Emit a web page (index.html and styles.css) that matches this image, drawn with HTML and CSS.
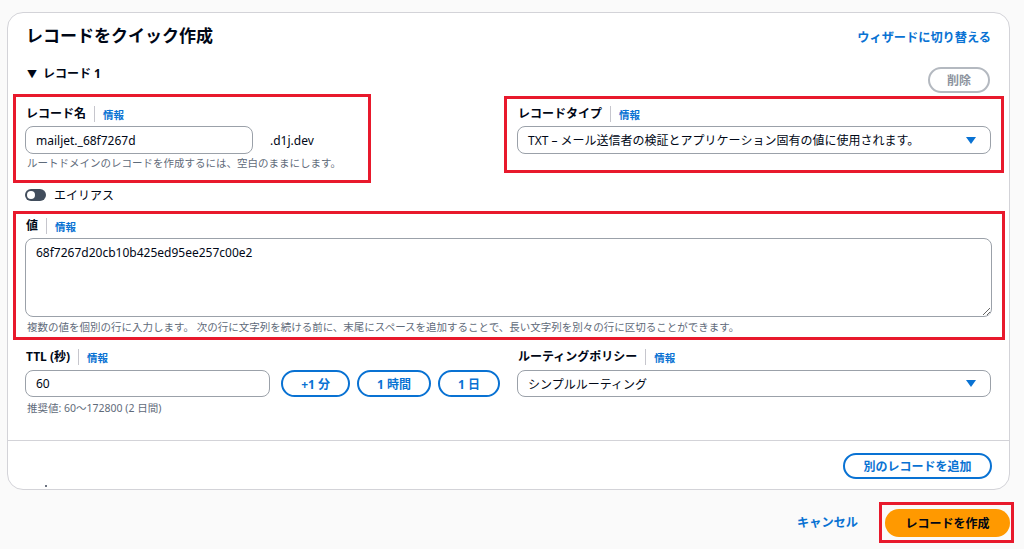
FILE: index.html
```html
<!DOCTYPE html>
<html lang="ja">
<head>
<meta charset="utf-8">
<title>レコードをクイック作成</title>
<link rel="stylesheet" href="styles.css">
</head>
<body>
<div class="page">
  <section class="card">
    <div class="card-body">
      <div class="card-header">
        <h1 class="title">レコードをクイック作成</h1>
        <a class="link-strong" href="#">ウィザードに切り替える</a>
      </div>

      <div class="section-head">
        <div class="expander"><span class="caret">▼</span>レコード 1</div>
        <button class="btn-disabled" type="button">削除</button>
      </div>

      <div class="grid">
        <div class="field">
          <div class="label-row"><span class="label">レコード名</span><span class="sep"></span><a class="info" href="#">情報</a></div>
          <div class="name-row">
            <input class="input input-name" type="text" value="mailjet._68f7267d" readonly>
            <span class="suffix">.d1j.dev</span>
          </div>
          <div class="hint">ルートドメインのレコードを作成するには、空白のままにします。</div>
        </div>
        <div class="field">
          <div class="label-row"><span class="label">レコードタイプ</span><span class="sep"></span><a class="info" href="#">情報</a></div>
          <div class="select">
            <span class="select-text">TXT – メール送信者の検証とアプリケーション固有の値に使用されます。</span>
            <svg class="caret-down" width="10" height="7" viewBox="0 0 10 7"><path d="M0 0H10L5 7Z" fill="#0972d3"/></svg>
          </div>
        </div>
      </div>

      <div class="toggle-row">
        <span class="toggle"><span class="knob"></span></span>
        <span class="toggle-label">エイリアス</span>
      </div>

      <div class="field value-field">
        <div class="label-row"><span class="label">値</span><span class="sep"></span><a class="info" href="#">情報</a></div>
        <textarea class="textarea" readonly>68f7267d20cb10b425ed95ee257c00e2</textarea>
        <div class="hint hint-tight">複数の値を個別の行に入力します。 次の行に文字列を続ける前に、末尾にスペースを追加することで、長い文字列を別々の行に区切ることができます。</div>
      </div>

      <div class="grid grid-ttl">
        <div class="field">
          <div class="label-row"><span class="label">TTL (秒)</span><span class="sep"></span><a class="info" href="#">情報</a></div>
          <div class="ttl-row">
            <input class="input input-ttl" type="text" value="60" readonly>
            <button class="btn-outline" type="button">+1 分</button>
            <button class="btn-outline" type="button">1 時間</button>
            <button class="btn-outline" type="button">1 日</button>
          </div>
          <div class="hint hint-ttl">推奨値: 60〜172800 (2 日間)</div>
        </div>
        <div class="field">
          <div class="label-row"><span class="label">ルーティングポリシー</span><span class="sep"></span><a class="info" href="#">情報</a></div>
          <div class="select select-ttl">
            <span class="select-text">シンプルルーティング</span>
            <svg class="caret-down" width="10" height="7" viewBox="0 0 10 7"><path d="M0 0H10L5 7Z" fill="#0972d3"/></svg>
          </div>
        </div>
      </div>
    </div>
    <div class="card-footer">
      <span class="speck"></span>
      <button class="btn-outline btn-add" type="button">別のレコードを追加</button>
    </div>
  </section>

  <div class="actions">
    <a class="link-strong" href="#">キャンセル</a>
    <button class="btn-primary" type="button">レコードを作成</button>
  </div>
</div>

<div class="mark mark-name"></div>
<div class="mark mark-type"></div>
<div class="mark mark-value"></div>
<div class="mark mark-create"></div>
</body>
</html>
```

FILE: styles.css
```css
* { box-sizing: border-box; }

html, body {
  margin: 0;
  padding: 0;
  background: #fafafa;
  font-family: "Noto Sans", "Noto Sans CJK JP", sans-serif;
  color: #000716;
  font-size: 12px;
}

.page {
  padding: 12px 14px 0 7px;
}

.card {
  background: #ffffff;
  border: 1px solid #d3d3d8;
  border-radius: 16px;
}

.card-body {
  padding: 11px 17px 24px 17px;
}

.card-header {
  display: flex;
  justify-content: space-between;
  align-items: center;
}

.title {
  margin: 0;
  font-size: 17px;
  line-height: 24px;
  font-weight: 700;
  padding-left: 1px;
}

.link-strong {
  color: #0972d3;
  font-weight: 700;
  font-size: 12.2px;
  text-decoration: none;
  line-height: 18px;
  margin-top: 3px;
  margin-right: 1px;
}

.section-head {
  display: flex;
  justify-content: space-between;
  align-items: flex-start;
  margin-top: 16px;
}

.expander {
  font-weight: 700;
  font-size: 12px;
  line-height: 20px;
  padding-left: 2px;
}

.caret {
  font-size: 10px;
  margin-right: 6px;
}

.btn-disabled {
  margin-top: 3px;
  margin-right: 2px;
  height: 26px;
  width: 62px;
  border: 2px solid #b4b9c0;
  border-radius: 16px;
  background: #ffffff;
  color: #8d949e;
  font-family: inherit;
  font-size: 12px;
  font-weight: 700;
  padding: 0;
}

.grid {
  display: grid;
  grid-template-columns: 475px 474px;
  column-gap: 17px;
  margin-top: 12px;
}

.label-row {
  display: flex;
  align-items: center;
  height: 18px;
}

.label {
  font-weight: 700;
  font-size: 12px;
  line-height: 18px;
  padding-left: 1px;
}

.sep {
  width: 1px;
  height: 16px;
  background: #c6c6cd;
  margin: 0 8px;
}

.info {
  color: #0972d3;
  font-weight: 700;
  font-size: 10.5px;
  text-decoration: none;
}

.name-row {
  display: flex;
  align-items: center;
  gap: 17px;
  margin-top: 3px;
}

.input {
  height: 28px;
  border: 1px solid #9ba1a9;
  border-radius: 8px;
  padding: 0 10px;
  font-family: inherit;
  font-size: 12px;
  color: #000716;
  background: #ffffff;
  outline: none;
}

.input-name {
  width: 228px;
}

.suffix {
  font-size: 12px;
}

.hint {
  margin-top: 1px;
  font-size: 10.5px;
  line-height: 16px;
  color: #5f6b7a;
  padding-left: 2px;
}

.select {
  margin-top: 3px;
  height: 28px;
  border: 1px solid #9ba1a9;
  border-radius: 8px;
  display: flex;
  align-items: center;
  justify-content: space-between;
  padding: 0 14px 0 10px;
}

.select-text {
  font-size: 12px;
  white-space: nowrap;
}

.caret-down {
  display: block;
}

.toggle-row {
  display: flex;
  align-items: center;
  gap: 8px;
  height: 20px;
  margin-top: 14px;
}

.toggle {
  width: 21px;
  height: 12px;
  border-radius: 6px;
  background: #414d5c;
  display: flex;
  align-items: center;
  padding-left: 2px;
}

.knob {
  width: 8px;
  height: 8px;
  border-radius: 50%;
  background: #ffffff;
}

.toggle-label {
  font-size: 12px;
}

.value-field {
  margin-top: 12px;
}

.textarea {
  display: block;
  width: 100%;
  height: 79px;
  margin-top: 3px;
  border: 1px solid #9ba1a9;
  border-radius: 8px;
  padding: 5px 10px;
  font-family: inherit;
  font-size: 12px;
  line-height: 18px;
  color: #000716;
  resize: vertical;
  outline: none;
}

.hint-tight {
  margin-top: 2px;
}

.grid-ttl {
  margin-top: 13px;
}

.ttl-row {
  display: flex;
  align-items: center;
  gap: 7px;
  margin-top: 4px;
}

.input-ttl {
  flex: 1;
  min-width: 0;
  height: 27px;
  margin-right: 4px;
}

.btn-outline {
  height: 27px;
  border: 2px solid #0972d3;
  border-radius: 16px;
  background: #ffffff;
  color: #0972d3;
  font-family: inherit;
  font-size: 12px;
  font-weight: 700;
  padding: 0 18px;
  white-space: nowrap;
}

.hint-ttl {
  margin-top: 3px;
}

.select-ttl {
  margin-top: 4px;
  height: 27px;
}

.card-footer {
  border-top: 1px solid #d3d3d8;
  display: flex;
  justify-content: space-between;
  align-items: flex-start;
  padding: 12px 17px 10px 37px;
}

.speck {
  width: 2px;
  height: 2px;
  background: #6b7280;
  align-self: flex-end;
  margin-bottom: -8px;
}

.btn-add {
  height: 26px;
  width: 149px;
  padding: 0;
}

.actions {
  display: flex;
  justify-content: flex-end;
  align-items: center;
  gap: 27px;
  margin-top: 19px;
}

.actions .link-strong {
  margin: 0;
}

.btn-primary {
  height: 28px;
  width: 125px;
  border: none;
  border-radius: 16px;
  background: #ff9900;
  color: #000716;
  font-family: inherit;
  font-size: 12px;
  font-weight: 700;
  padding: 0;
}

.mark {
  position: absolute;
  border: 3px solid #e8192c;
  pointer-events: none;
}

.mark-name { left: 13px; top: 94px; width: 358px; height: 89px; }
.mark-type { left: 504px; top: 96px; width: 500px; height: 77px; }
.mark-value { left: 13px; top: 211px; width: 992px; height: 129px; }
.mark-create { left: 879px; top: 502px; width: 135px; height: 41px; }
```
